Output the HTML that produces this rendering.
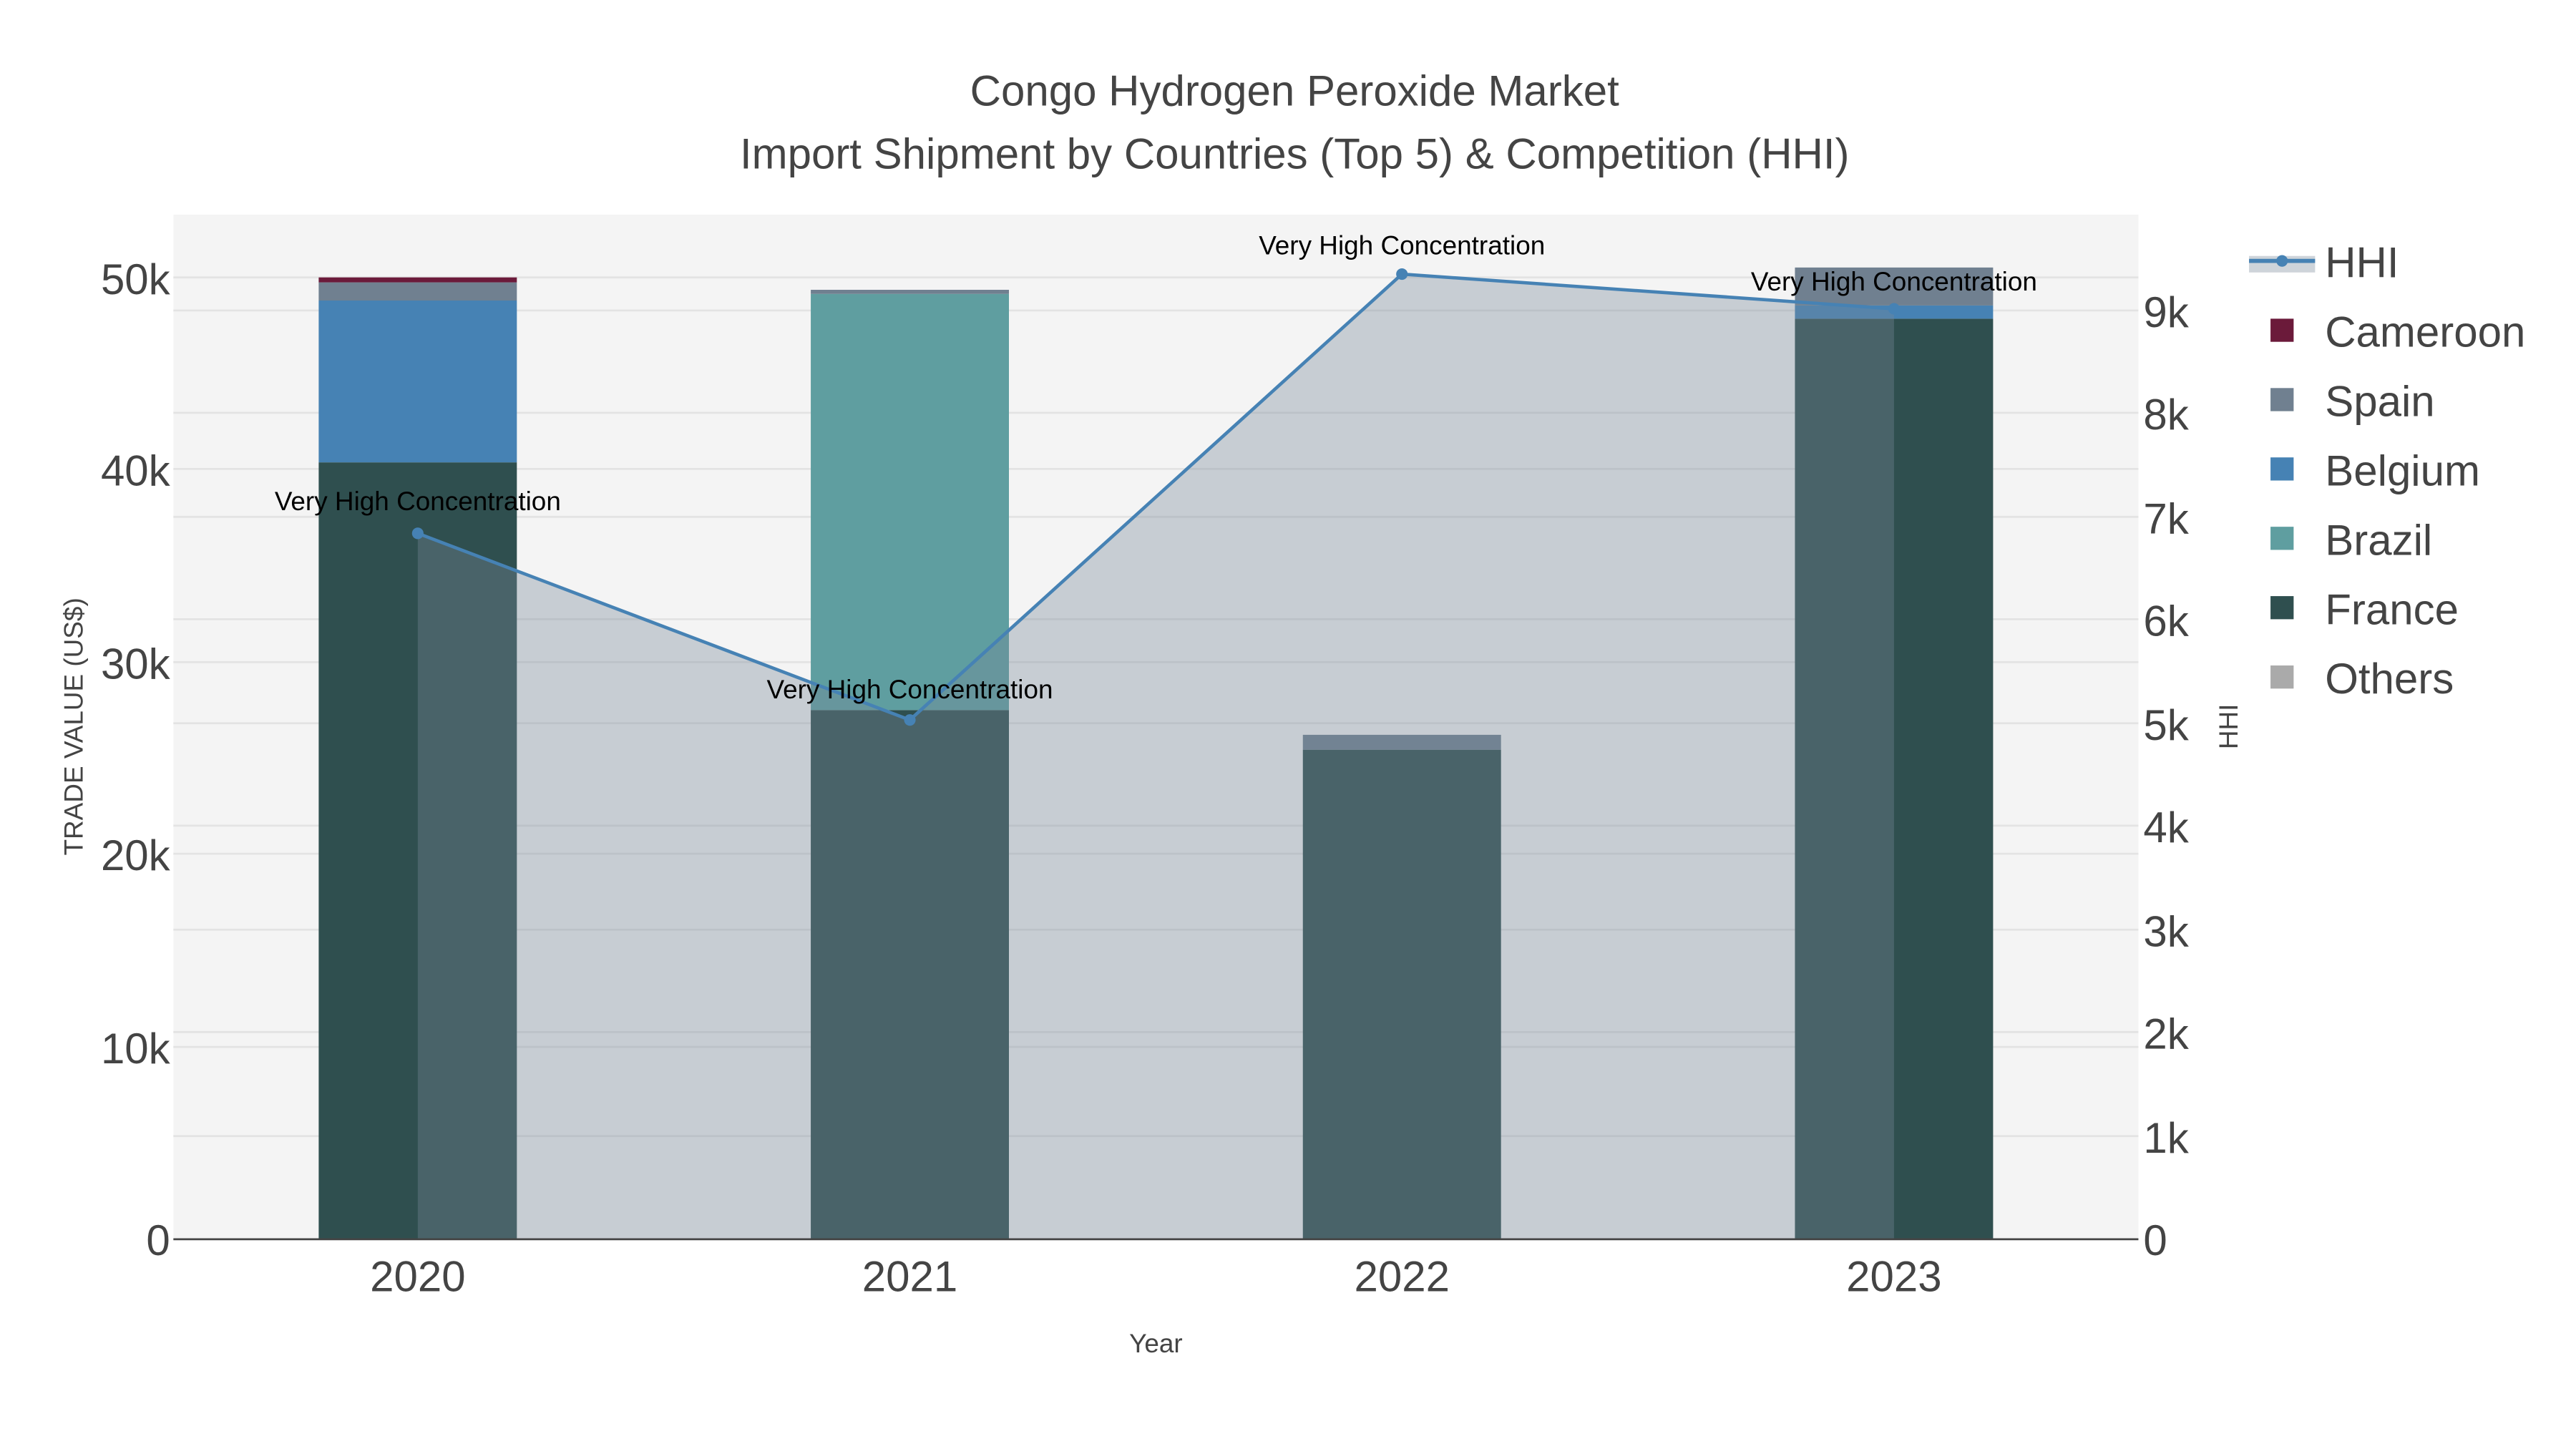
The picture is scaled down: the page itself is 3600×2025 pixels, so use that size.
<!DOCTYPE html>
<html><head><style>html,body{margin:0;padding:0;background:#fff}svg{display:block}</style></head>
<body>
<svg width="3600" height="2025" viewBox="0 0 1560 877.5" xmlns="http://www.w3.org/2000/svg" font-family="Liberation Sans, sans-serif">
<rect x="0" y="0" width="1560" height="877.5" fill="#fff"/>
<rect x="105" y="130" width="1190" height="620" fill="#f4f4f4"/>
<g stroke="#e3e3e3" stroke-width="1.2">
<line x1="105" x2="1295" y1="634" y2="634"/><line x1="105" x2="1295" y1="517" y2="517"/><line x1="105" x2="1295" y1="401" y2="401"/><line x1="105" x2="1295" y1="284" y2="284"/><line x1="105" x2="1295" y1="168" y2="168"/>
<line x1="105" x2="1295" y1="688" y2="688"/><line x1="105" x2="1295" y1="625" y2="625"/><line x1="105" x2="1295" y1="563" y2="563"/><line x1="105" x2="1295" y1="500" y2="500"/><line x1="105" x2="1295" y1="438" y2="438"/><line x1="105" x2="1295" y1="375" y2="375"/><line x1="105" x2="1295" y1="313" y2="313"/><line x1="105" x2="1295" y1="250" y2="250"/><line x1="105" x2="1295" y1="188" y2="188"/>
</g>
<rect x="193" y="280" width="120" height="470" fill="#2f4f4f"/>
<rect x="193" y="182" width="120" height="98" fill="#4682b4"/>
<rect x="193" y="171" width="120" height="11" fill="#708090"/>
<rect x="193" y="168" width="120" height="3" fill="#6b1a3a"/>
<rect x="491" y="430" width="120" height="320" fill="#2f4f4f"/>
<rect x="491" y="178" width="120" height="252" fill="#5f9ea0"/>
<rect x="491" y="175.5" width="120" height="2.5" fill="#708090"/>
<rect x="789" y="454" width="120" height="296" fill="#2f4f4f"/>
<rect x="789" y="445" width="120" height="9" fill="#708090"/>
<rect x="1087" y="193" width="120" height="557" fill="#2f4f4f"/>
<rect x="1087" y="185" width="120" height="8" fill="#4682b4"/>
<rect x="1087" y="162" width="120" height="23" fill="#708090"/>
<polygon points="253,323 551,436 849,166 1147,187 1147,750 253,750" fill="rgba(119,136,153,0.36)"/>
<polyline points="253,323 551,436 849,166 1147,187" fill="none" stroke="#4682b4" stroke-width="2"/>
<g fill="#4682b4"><circle cx="253" cy="323" r="3.5"/><circle cx="551" cy="436" r="3.5"/><circle cx="849" cy="166" r="3.5"/><circle cx="1147" cy="187" r="3.5"/></g>
<line x1="105" x2="1295" y1="750.5" y2="750.5" stroke="#444" stroke-width="1.2"/>
<g font-size="16" fill="#000" text-anchor="middle">
<text x="253" y="309">Very High Concentration</text><text x="551" y="423">Very High Concentration</text><text x="849" y="154">Very High Concentration</text><text x="1147" y="176">Very High Concentration</text>
</g>
<g font-size="26" fill="#444" text-anchor="end">
<text x="103" y="760">0</text><text x="103" y="644">10k</text><text x="103" y="527">20k</text><text x="103" y="411">30k</text><text x="103" y="294">40k</text><text x="103" y="178">50k</text>
</g>
<g font-size="26" fill="#444" text-anchor="start">
<text x="1298" y="760">0</text><text x="1298" y="698">1k</text><text x="1298" y="635">2k</text><text x="1298" y="573">3k</text><text x="1298" y="510">4k</text><text x="1298" y="448">5k</text><text x="1298" y="385">6k</text><text x="1298" y="323">7k</text><text x="1298" y="260">8k</text><text x="1298" y="198">9k</text>
</g>
<g font-size="26" fill="#444" text-anchor="middle">
<text x="253" y="782">2020</text><text x="551" y="782">2021</text><text x="849" y="782">2022</text><text x="1147" y="782">2023</text>
</g>
<text x="700" y="819" font-size="16" fill="#444" text-anchor="middle">Year</text>
<text transform="translate(50,440) rotate(-90)" font-size="16" fill="#444" text-anchor="middle">TRADE VALUE (US$)</text>
<text transform="translate(1355,440) rotate(-90)" font-size="16" fill="#444" text-anchor="middle">HHI</text>
<g font-size="26" fill="#444" text-anchor="middle">
<text x="784" y="64">Congo Hydrogen Peroxide Market</text>
<text x="784" y="102">Import Shipment by Countries (Top 5) &amp; Competition (HHI)</text>
</g>
<rect x="1362" y="155" width="40" height="10" fill="rgba(119,136,153,0.36)"/>
<line x1="1362" x2="1402" y1="158" y2="158" stroke="#4682b4" stroke-width="2.5"/>
<circle cx="1382" cy="158" r="3.5" fill="#4682b4"/>
<g><rect x="1375" y="193" width="14" height="14" fill="#6b1a3a"/><rect x="1375" y="235" width="14" height="14" fill="#708090"/><rect x="1375" y="277" width="14" height="14" fill="#4682b4"/><rect x="1375" y="319" width="14" height="14" fill="#5f9ea0"/><rect x="1375" y="361" width="14" height="14" fill="#2f4f4f"/><rect x="1375" y="403" width="14" height="14" fill="#aaaaaa"/></g>
<g font-size="26" fill="#444">
<text x="1408" y="168">HHI</text><text x="1408" y="210">Cameroon</text><text x="1408" y="252">Spain</text><text x="1408" y="294">Belgium</text><text x="1408" y="336">Brazil</text><text x="1408" y="378">France</text><text x="1408" y="420">Others</text>
</g>
</svg>
</body></html>
